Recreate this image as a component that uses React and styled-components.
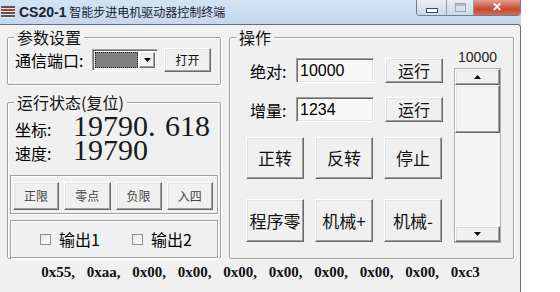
import React from 'react';
import styled, { createGlobalStyle } from 'styled-components';

const GlobalStyle = createGlobalStyle`
	html,
	body {
		margin: 0;
		padding: 0;
		background: #fff;
	}
	body {
		font-family: 'Liberation Sans', 'Noto Sans CJK SC', sans-serif;
		color: #000;
	}
`;

const bytes = ['0x55', '0xaa', '0x00', '0x00', '0x00', '0x00', '0x00', '0x00', '0x00', '0xc3'];

const App = () => {
	return (
		<>
			<GlobalStyle />
			<Window>
				<TitleBar>
					<AppIcon width='14' height='12' viewBox='0 0 14 12'>
						<rect x='0' y='0' width='14' height='12' fill='#e8e8e8' />
						<rect x='0' y='0' width='14' height='2' fill='#555' />
						<rect x='0' y='3' width='14' height='2' fill='#b33a2c' />
						<rect x='0' y='6' width='14' height='2' fill='#555' />
						<rect x='0' y='9' width='14' height='2' fill='#555' />
					</AppIcon>
					<Title>
						<b>CS20-1</b> 智能步进电机驱动器控制终端
					</Title>
					<Controls>
						<CtrlButton>
							<MinGlyph />
						</CtrlButton>
						<CtrlButton $w={26}>
							<MaxGlyph />
						</CtrlButton>
						<CloseButton>✕</CloseButton>
					</Controls>
				</TitleBar>
				<Client>
					<Body>
						<LeftColumn>
							<Group $h={48}>
								<Legend>参数设置</Legend>
								<PortRow>
									<PortLabel>通信端口:</PortLabel>
									<Combo>
										<ComboValue />
										<ComboArrow>
											<svg width='7' height='4' viewBox='0 0 7 4'>
												<path d='M0 0h7L3.5 4z' fill='#000' />
											</svg>
										</ComboArrow>
									</Combo>
									<Button $w={47} $h={24} $size={12}>
										打开
									</Button>
								</PortRow>
							</Group>
							<StatusGroup $h={157}>
								<Legend>运行状态(复位)</Legend>
								<ValueRow>
									<ValueLabel>坐标:</ValueLabel>
									<BigValue>
										19790<Dot>.</Dot>618
									</BigValue>
								</ValueRow>
								<ValueRow>
									<ValueLabel>速度:</ValueLabel>
									<BigValue>19790</BigValue>
								</ValueRow>
								<InnerBox $h={39}>
									<LimitGrid>
										<Button $h={28} $size={12} $muted>
											正限
										</Button>
										<Button $h={28} $size={12} $muted>
											零点
										</Button>
										<Button $h={28} $size={12} $muted>
											负限
										</Button>
										<Button $h={28} $size={12} $muted>
											入四
										</Button>
									</LimitGrid>
								</InnerBox>
								<OutputBox $h={38}>
									<Check>
										<CheckMark />
										输出1
									</Check>
									<Check>
										<CheckMark />
										输出2
									</Check>
								</OutputBox>
							</StatusGroup>
						</LeftColumn>
						<OpGroup $h={222}>
							<Legend>操作</Legend>
							<OpArea>
								<MoveRow>
									<MoveLabel>绝对:</MoveLabel>
									<Edit>10000</Edit>
									<Button $w={58} $h={25} $size={16}>
										运行
									</Button>
								</MoveRow>
								<MoveRow>
									<MoveLabel>增量:</MoveLabel>
									<Edit>1234</Edit>
									<Button $w={58} $h={25} $size={16}>
										运行
									</Button>
								</MoveRow>
								<ActionGrid>
									<Button $h={42} $size={17}>
										正转
									</Button>
									<Button $h={42} $size={17}>
										反转
									</Button>
									<Button $h={42} $size={17}>
										停止
									</Button>
									<Button $h={43} $size={17}>
										程序零
									</Button>
									<Button $h={43} $size={17}>
										机械+
									</Button>
									<Button $h={43} $size={17}>
										机械-
									</Button>
								</ActionGrid>
							</OpArea>
							<ScrollColumn>
								<ScrollValue>10000</ScrollValue>
								<ScrollBar>
									<ScrollButton>
										<svg width='7' height='4' viewBox='0 0 7 4'>
											<path d='M0 4h7L3.5 0z' fill='#000' />
										</svg>
									</ScrollButton>
									<Thumb />
									<Track />
									<ScrollButton>
										<svg width='7' height='4' viewBox='0 0 7 4'>
											<path d='M0 0h7L3.5 4z' fill='#000' />
										</svg>
									</ScrollButton>
								</ScrollBar>
							</ScrollColumn>
						</OpGroup>
					</Body>
					<StatusLine>{bytes.join(', ')}</StatusLine>
				</Client>
			</Window>
		</>
	);
};

const Window = styled.div`
	width: 521px;
	display: flex;
	flex-direction: column;
`;

const TitleBar = styled.div`
	height: 24px;
	display: flex;
	align-items: flex-start;
	background: linear-gradient(#d3e3f5, #c3d8ef);
`;

const AppIcon = styled.svg`
	margin: 6px 0 0 1px;
	flex: none;
`;

const Title = styled.div`
	margin: 3px 0 0 4px;
	font-family: 'Noto Sans CJK SC', sans-serif;
	font-size: 12px;
	line-height: 17px;
	color: #1b2230;
	b {
		font-family: 'Liberation Sans', sans-serif;
		font-size: 14px;
	}
`;

const Controls = styled.div`
	margin-left: auto;
	display: flex;
	height: 15px;
	border: 1px solid #6f7f93;
	border-top: none;
	border-radius: 0 0 4px 4px;
	overflow: hidden;
`;

const CtrlButton = styled.div`
	width: ${(p) => p.$w || 29}px;
	display: flex;
	align-items: center;
	justify-content: center;
	background: linear-gradient(#e6edf5, #cdd9e6);
	border-right: 1px solid #8e9db0;
`;

const MinGlyph = styled.span`
	width: 10px;
	height: 3px;
	margin-top: 6px;
	background: #fff;
	border: 1px solid #3b4a5e;
`;

const MaxGlyph = styled.span`
	width: 9px;
	height: 7px;
	border: 1px solid #9aa6b4;
	box-shadow: inset 0 2px 0 #b4bdc8;
`;

const CloseButton = styled.div`
	width: 46px;
	display: flex;
	align-items: center;
	justify-content: center;
	background: linear-gradient(#e0a090, #c84a30 60%, #d86a4c);
	color: #fff;
	font-size: 12px;
	font-weight: 700;
	line-height: 15px;
`;

const Client = styled.div`
	height: 261px;
	background: #f0f0f0;
	border-top: 1px solid #606e80;
	border-right: 1px solid #606e80;
	border-bottom: 1px solid #8a8a8a;
	border-top-right-radius: 3px;
	display: flex;
	flex-direction: column;
	padding: 12px 6px 0 7px;
`;

const Body = styled.div`
	display: flex;
	gap: 8px;
`;

const LeftColumn = styled.div`
	width: 214px;
	display: flex;
	flex-direction: column;
	gap: 17px;
`;

const Group = styled.div`
	position: relative;
	box-sizing: border-box;
	height: ${(p) => p.$h}px;
	border: 1px solid #a0a0a0;
	border-radius: 2px;
	box-shadow: inset 1px 1px 0 #fff, 1px 1px 0 #fff;
	font-family: 'Noto Sans CJK SC', sans-serif;
`;

const Legend = styled.span`
	position: absolute;
	top: -10px;
	left: 6px;
	padding: 0 3px;
	background: #f0f0f0;
	font-size: 16px;
	line-height: 18px;
	color: #111;
`;

const PortRow = styled.div`
	display: flex;
	align-items: center;
	height: 24px;
	margin: 10px 0 0 7px;
`;

const PortLabel = styled.span`
	width: 77px;
	font-size: 16px;
	line-height: 20px;
`;

const sunken = `
	box-sizing: border-box;
	border: 1px solid;
	border-color: #a0a0a0 #fff #fff #a0a0a0;
	box-shadow: inset 1px 1px 0 #696969, inset -1px -1px 0 #e3e3e3;
`;

const raised = `
	box-sizing: border-box;
	background: #f0f0f0;
	border: 1px solid;
	border-color: #fff #696969 #696969 #fff;
	box-shadow: inset -1px -1px 0 #a0a0a0, inset 1px 1px 0 #e3e3e3;
`;

const Combo = styled.div`
	${sunken}
	width: 66px;
	height: 22px;
	margin-right: 6px;
	display: flex;
	padding: 2px;
	background: #fff;
`;

const ComboValue = styled.span`
	flex: 1;
	background: #808080;
	outline: 1px dotted #222;
	outline-offset: -1px;
	margin-right: 1px;
`;

const ComboArrow = styled.span`
	${raised}
	width: 16px;
	display: flex;
	align-items: center;
	justify-content: center;
`;

const Button = styled.div`
	${raised}
	width: ${(p) => (p.$w ? `${p.$w}px` : 'auto')};
	height: ${(p) => p.$h}px;
	display: flex;
	align-items: center;
	justify-content: center;
	font-family: 'Noto Sans CJK SC', sans-serif;
	font-size: ${(p) => p.$size}px;
	color: ${(p) => (p.$muted ? '#444' : '#111')};
	padding-bottom: 1px;
`;

const StatusGroup = styled(Group)`
	padding-top: 11px;
`;

const ValueRow = styled.div`
	height: 24px;
	line-height: 24px;
	white-space: nowrap;
`;

const ValueLabel = styled.span`
	display: inline-block;
	width: 58px;
	margin-left: 7px;
	font-size: 16px;
`;

const BigValue = styled.span`
	display: inline-block;
	height: 24px;
	font-family: 'Liberation Serif', serif;
	font-size: 30px;
	line-height: 24px;
	color: #1a1a1a;
`;

const Dot = styled.span`
	display: inline-block;
	width: 17px;
`;

const InnerBox = styled.div`
	box-sizing: border-box;
	height: ${(p) => p.$h}px;
	margin: 13px 2px 0;
	border: 1px solid #a0a0a0;
	box-shadow: inset 1px 1px 0 #fff, 1px 1px 0 #fff;
`;

const LimitGrid = styled.div`
	display: grid;
	grid-template-columns: repeat(4, 1fr);
	gap: 5px;
	padding: 6px 4px 0 2px;
`;

const OutputBox = styled(InnerBox)`
	margin-top: 6px;
	display: grid;
	grid-template-columns: 92px auto;
	align-items: center;
	padding-left: 29px;
`;

const Check = styled.span`
	display: flex;
	align-items: center;
	gap: 8px;
	font-size: 16px;
	line-height: 20px;
`;

const CheckMark = styled.span`
	width: 11px;
	height: 11px;
	box-sizing: border-box;
	border: 1px solid #8e8f8f;
	background: linear-gradient(135deg, #e6e6e6, #fff);
`;

const OpGroup = styled(Group)`
	flex: 1;
	display: flex;
`;

const OpArea = styled.div`
	width: 223px;
	display: flex;
	flex-direction: column;
`;

const MoveRow = styled.div`
	display: flex;
	align-items: center;
	height: 25px;
	margin: 20px 0 0 20px;
	& + & {
		margin-top: 14px;
	}
`;

const MoveLabel = styled.span`
	width: 46px;
	font-size: 16px;
	line-height: 20px;
`;

const Edit = styled.div`
	${sunken}
	width: 78px;
	height: 25px;
	margin-right: 11px;
	background: #f7f7f7;
	padding: 2px 0 0 3px;
	font-family: 'Liberation Sans', sans-serif;
	font-size: 16px;
	line-height: 20px;
`;

const ActionGrid = styled.div`
	display: grid;
	grid-template-columns: repeat(3, 58px);
	column-gap: 11px;
	row-gap: 20px;
	margin: 15px 0 0 16px;
`;

const ScrollColumn = styled.div`
	display: flex;
	flex-direction: column;
	align-items: center;
	width: 47px;
	margin-left: auto;
	margin-right: 12px;
	padding-top: 11px;
`;

const ScrollValue = styled.span`
	font-family: 'Liberation Sans', sans-serif;
	font-size: 14px;
	line-height: 16px;
	color: #222;
`;

const ScrollBar = styled.div`
	margin-top: 3px;
	width: 47px;
	height: 175px;
	box-sizing: border-box;
	display: flex;
	flex-direction: column;
	background: #f4f4f4;
	border: 1px solid #b0b0b0;
`;

const ScrollButton = styled.div`
	${raised}
	height: 16px;
	display: flex;
	align-items: center;
	justify-content: center;
	flex: none;
`;

const Thumb = styled.div`
	${raised}
	height: 48px;
	background: #f3f3f3;
	flex: none;
`;

const Track = styled.div`
	flex: 1;
	background: #f5f5f5;
`;

const StatusLine = styled.div`
	height: 27px;
	line-height: 27px;
	text-align: center;
	font-family: 'Liberation Serif', serif;
	font-weight: 700;
	font-size: 15px;
	word-spacing: 8px;
	color: #111;
`;

export default App;
